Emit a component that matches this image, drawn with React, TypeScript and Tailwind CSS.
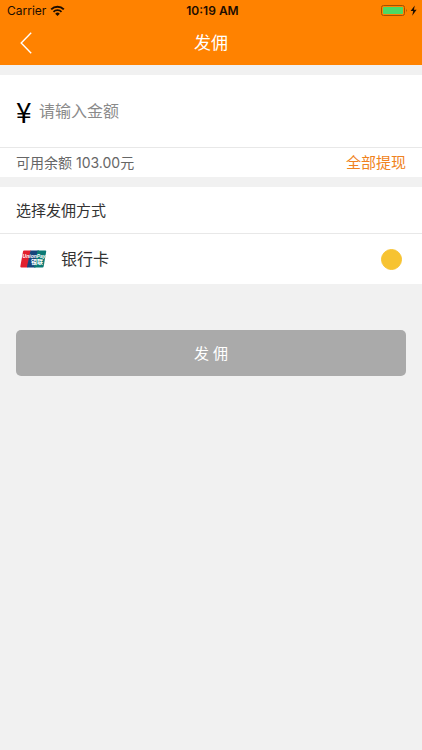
import React, { useState } from "react";

const BALANCE = 103;

const WifiIcon = () => (
  <svg width="15" height="12" viewBox="0 0 15 12" aria-hidden="true">
    <path d="M1.2 4.4a9 9 0 0 1 12.6 0" fill="none" stroke="#1c0d00" strokeWidth="2" />
    <path d="M3.5 6.9a5.6 5.6 0 0 1 8 0" fill="none" stroke="#1c0d00" strokeWidth="1.8" />
    <path d="M7.5 11 5.2 8.7a3.3 3.3 0 0 1 4.6 0z" fill="#1c0d00" />
  </svg>
);

const BatteryIcon = () => (
  <svg width="37" height="12" viewBox="0 0 37 12" aria-hidden="true">
    <rect x="0.5" y="0.5" width="23" height="10" rx="2" fill="none" stroke="#a45200" />
    <rect x="2" y="2" width="20" height="7" rx="0.8" fill="#4cd964" />
    <path d="M25 3.8q1.6 1.7 0 3.4z" fill="#a45200" />
    <path d="M33.8 0.4 29.6 6.1h2.6l-1 4.6 4.4-6h-2.7z" fill="#1c0d00" />
  </svg>
);

const UnionPayLogo = () => (
  <svg width="27" height="18" viewBox="0 0 27 18" aria-hidden="true">
    <path d="M4 0.5h7L7.5 17.5h-6Q0 17.5 0.4 16L3 1.6Q3.2 0.5 4 0.5z" fill="#e21f2d" />
    <path d="M10.5 0.5h8.5L15.5 17.5H7.3Q6.8 17.5 7.1 16.3z" fill="#17457c" />
    <path d="M17.5 0.5h8Q26.4 0.5 26.2 1.6L23.7 16.3Q23.5 17.5 22.5 17.5H14z" fill="#0b7a75" />
    <text x="2.6" y="7.6" fontSize="5" fontWeight="700" fontStyle="italic" fill="#fff" fontFamily="Liberation Sans, sans-serif">UnionPay</text>
    <text x="11" y="14.4" fontSize="6" fontWeight="700" fill="#fff" fontFamily="Noto Sans CJK SC, sans-serif">银联</text>
  </svg>
);

const App = () => {
  const [amount, setAmount] = useState("");
  const [method, setMethod] = useState("bank");

  const canSubmit = Number(amount) > 0 && Number(amount) <= BALANCE;

  return (
    <div className="min-h-screen bg-[#f1f1f1] font-['Inter','Noto_Sans_CJK_SC',sans-serif] text-[#333]">
      <header className="bg-[#ff8200]">
        <div className="grid grid-cols-3 items-center h-5 pt-0.5 pl-[7px] pr-1 text-[#1c0d00]">
          <div className="flex items-center gap-1 text-xs">
            <span>Carrier</span>
            <WifiIcon />
          </div>
          <span className="text-center text-xs font-semibold">10:19 AM</span>
          <div className="flex justify-end">
            <BatteryIcon />
          </div>
        </div>
        <div className="grid grid-cols-3 items-center h-[45px] px-[14px] text-white">
          <button type="button" aria-label="返回" className="w-6 h-6 flex items-center justify-center">
            <svg width="12" height="22" viewBox="0 0 12 22" fill="none" stroke="currentColor" strokeWidth="1.4">
              <path d="M11.2 0.8 1.2 11l10 10.2" />
            </svg>
          </button>
          <h1 className="pt-[3px] text-center text-[17px]">发佣</h1>
        </div>
      </header>

      <main>
        <section className="mt-[10px] bg-white">
          <div className="flex items-center gap-[7px] h-[72px] px-4">
            <label htmlFor="amount" className="w-4 font-['Noto_Sans_CJK_SC',sans-serif] text-[28px] leading-7 text-black">¥</label>
            <input
              type="text"
              id="amount"
              inputMode="decimal"
              placeholder="请输入金额"
              value={amount}
              onChange={(e) => setAmount(e.target.value)}
              className="flex-1 min-w-0 text-base placeholder:text-[#8a8a8a] focus:outline-none"
            />
          </div>
          <div className="flex items-center justify-between h-[30px] px-4 border-t border-[#e8e8e8]">
            <p className="text-sm text-[#666]">可用余额 {BALANCE.toFixed(2)}元</p>
            <button
              type="button"
              onClick={() => setAmount(BALANCE.toFixed(2))}
              className="pt-0.5 text-[15px] text-[#f08220]"
            >
              全部提现
            </button>
          </div>
        </section>

        <section className="mt-[10px] bg-white">
          <h2 className="flex items-center h-[46px] px-4 pt-0.5 text-[15px]">选择发佣方式</h2>
          <div className="flex items-center h-[51px] px-5 border-t border-[#e8e8e8]">
            <label htmlFor="bank" className="flex flex-1 items-center gap-[14px] text-base">
              <UnionPayLogo />
              <span>银行卡</span>
            </label>
            <input
              type="radio"
              id="bank"
              name="method"
              checked={method === "bank"}
              onChange={() => setMethod("bank")}
              className="appearance-none w-[21px] h-[21px] rounded-full border border-[#f7c331] checked:bg-[#f7c331]"
            />
          </div>
        </section>

        <div className="px-4 pt-[46px]">
          <button
            type="button"
            disabled={!canSubmit}
            className="w-full h-[46px] pt-0.5 rounded-[5px] bg-[#ff8200] text-[15px] text-white disabled:bg-[#aaa]"
          >
            发 佣
          </button>
        </div>
      </main>
    </div>
  );
};

export default App;
